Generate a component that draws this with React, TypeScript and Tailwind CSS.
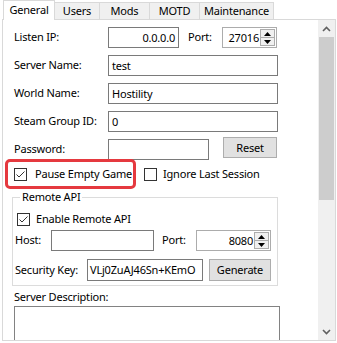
import React from "react";

const font = { fontFamily: '"Noto Sans", "Liberation Sans", sans-serif' };

function Check({ checked }: { checked: boolean }) {
  return (
    <svg width="13" height="13" viewBox="0 0 13 13" className="shrink-0">
      <rect x="0.5" y="0.5" width="12" height="12" fill="#fff" stroke="#333" />
      {checked && <polyline points="2.5,6.5 5,9 10.5,3.5" fill="none" stroke="#333" strokeWidth="1" />}
    </svg>
  );
}

function Spinner({ value, w }: { value: string; w: string }) {
  return (
    <div className={`flex h-[21px] items-stretch border border-[#acacac] bg-white ${w}`}>
      <div className="flex-1 pr-[1px] text-right leading-[19px]">{value}</div>
      <div className="my-[1px] mr-[1px] flex w-[15px] flex-col">
        <div className="flex flex-1 items-center justify-center border border-[#acacac] bg-[#f0f0f0]">
          <svg width="7" height="4" viewBox="0 0 7 4"><polygon points="0,4 7,4 3.5,0" fill="#000" /></svg>
        </div>
        <div className="-mt-px flex flex-1 items-center justify-center border border-[#acacac] bg-[#f0f0f0]">
          <svg width="7" height="4" viewBox="0 0 7 4"><polygon points="0,0 7,0 3.5,4" fill="#000" /></svg>
        </div>
      </div>
    </div>
  );
}

function Field({ label, value, w = "w-[170px]" }: { label: string; value: string; w?: string }) {
  return (
    <div className="flex h-[21px] items-center">
      <div className="w-[94px]">{label}</div>
      <div className={`h-[21px] border border-[#7a7a7a] bg-white px-[3px] leading-[19px] ${w}`}>{value}</div>
    </div>
  );
}

export default function App() {
  const tabs = [
    { name: "Users", w: "w-[45px]" },
    { name: "Mods", w: "w-[50px]" },
    { name: "MOTD", w: "w-[50px]" },
    { name: "Maintenance", w: "w-[74px]" },
  ];

  return (
    <div className="h-[343px] w-[337px] overflow-hidden bg-white text-[11px] tracking-[-0.2px] text-black" style={font}>
      {/* tab strip */}
      <div className="relative z-10 ml-[3px] flex h-[20px] items-end">
        <div className="flex h-[20px] w-[52px] items-start justify-center border border-b-0 border-[#d9d9d9] bg-white pt-[1px] leading-[16px]">
          General
        </div>
        {tabs.map((t) => (
          <div
            key={t.name}
            className={`mb-px flex h-[17px] items-center justify-center border border-b-0 border-l-0 border-[#d9d9d9] bg-[#f0f0f0] leading-[16px] ${t.w}`}
          >
            {t.name}
          </div>
        ))}
      </div>

      {/* panel */}
      <div className="-mt-px ml-[2px] flex h-[322px] w-[334px] border border-[#d9d9d9] bg-white">
        <div className="flex-1 overflow-hidden">
          <div className="flex flex-col pl-[11px] pt-[7px]">
            <div className="flex h-[21px] items-center">
              <div className="w-[94px]">Listen IP:</div>
              <div className="h-[21px] w-[71px] border border-[#7a7a7a] bg-white px-[3px] text-right leading-[19px]">0.0.0.0</div>
              <div className="ml-[9px] w-[34px]">Port:</div>
              <Spinner value="27016" w="w-[55px]" />
            </div>
            <div className="mt-[7px]"><Field label="Server Name:" value="test" /></div>
            <div className="mt-[7px]"><Field label="World Name:" value="Hostility" /></div>
            <div className="mt-[7px]"><Field label="Steam Group ID:" value="0" /></div>
            <div className="mt-[7px] flex h-[21px] items-start">
              <Field label="Password:" value="" w="w-[101px]" />
              <button className="-mt-[2px] ml-[14px] h-[21px] w-[54px] border border-[#adadad] bg-[#e1e1e1] leading-[19px]">Reset</button>
            </div>
          </div>

          {/* checkboxes */}
          <div className="-mt-px flex h-[30px] items-center">
            <div className="ml-[2px] flex h-[30px] w-[131px] items-center gap-[8px] rounded-[5px] border-[3px] border-[#e5393f] pl-[6px]">
              <Check checked />
              <span>Pause Empty Game</span>
            </div>
            <div className="ml-[8px] flex items-center gap-[6px]">
              <Check checked={false} />
              <span>Ignore Last Session</span>
            </div>
          </div>

          {/* remote api group */}
          <fieldset className="ml-[9px] w-[266px] border border-[#dcdcdc] pb-[4px] pl-[2px]">
            <legend className="ml-[5px] px-[2px] leading-[16px]">Remote API</legend>
            <div className="ml-[2px] mt-[8px] flex h-[13px] items-center gap-[6px]">
              <Check checked />
              <span>Enable Remote API</span>
            </div>
            <div className="mt-[4px] flex h-[21px] items-center">
              <div className="w-[36px]">Host:</div>
              <div className="h-[21px] w-[103px] border border-[#7a7a7a] bg-white" />
              <div className="ml-[8px] w-[34px]">Port:</div>
              <Spinner value="8080" w="w-[75px]" />
            </div>
            <div className="mt-[8px] flex h-[22px] items-center">
              <div className="w-[72px]">Security Key:</div>
              <div className="h-[22px] w-[116px] overflow-hidden whitespace-nowrap border border-[#7a7a7a] bg-white px-[2px] leading-[20px]">
                VLj0ZuAJ46Sn+KEmO
              </div>
              <button className="ml-[6px] h-[22px] w-[62px] border border-[#adadad] bg-[#e1e1e1] leading-[20px]">Generate</button>
            </div>
          </fieldset>

          <div className="ml-[11px] mt-[3px] leading-[16px]">Server Description:</div>
          <div className="ml-[11px] mt-[1px] h-[90px] w-[266px] border border-[#828282] bg-white" />
        </div>

        {/* scrollbar */}
        <div className="flex w-[17px] flex-col items-center bg-[#f0f0f0]">
          <div className="flex h-[17px] w-full items-center justify-center">
            <svg width="9" height="6" viewBox="0 0 9 6"><polyline points="1,5 4.5,1.5 8,5" fill="none" stroke="#606060" strokeWidth="1.6" /></svg>
          </div>
          <div className="h-[163px] w-[15px] bg-[#cdcdcd]" />
          <div className="flex-1" />
          <div className="flex h-[17px] w-full items-center justify-center">
            <svg width="9" height="6" viewBox="0 0 9 6"><polyline points="1,1 4.5,4.5 8,1" fill="none" stroke="#606060" strokeWidth="1.6" /></svg>
          </div>
        </div>
      </div>
    </div>
  );
}
